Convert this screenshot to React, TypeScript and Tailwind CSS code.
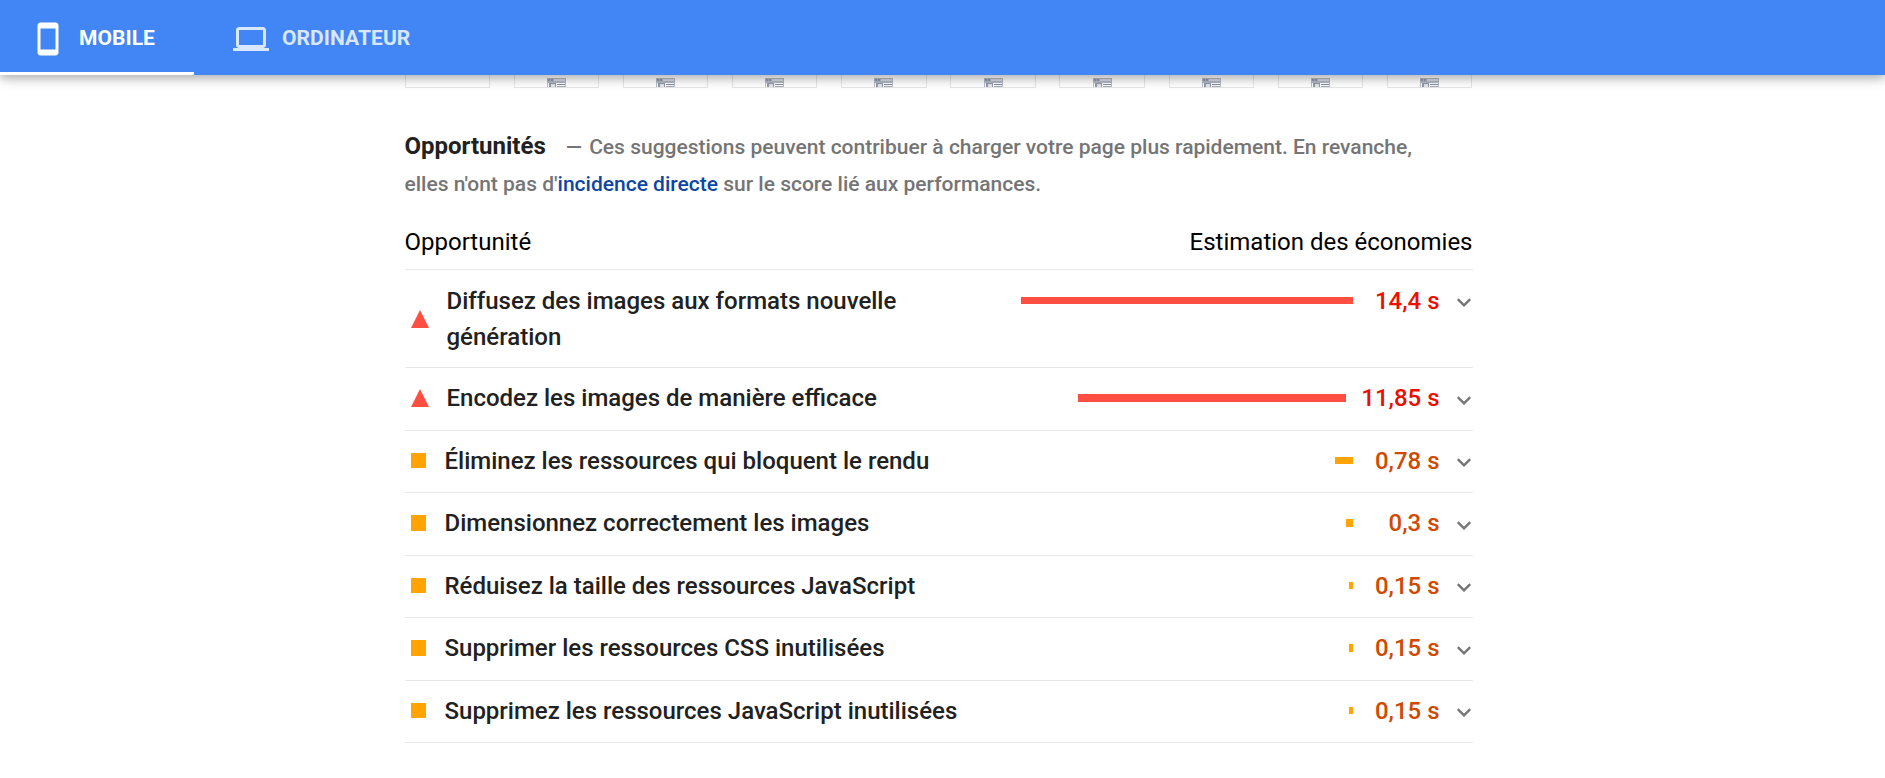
import React from "react";

type Level = "fail" | "average";

interface Opportunity {
  title: string;
  value: string;
  level: Level;
  bar: number;
}

const opportunities: Opportunity[] = [
  { title: "Diffusez des images aux formats nouvelle génération", value: "14,4 s", level: "fail", bar: 332 },
  { title: "Encodez les images de manière efficace", value: "11,85 s", level: "fail", bar: 268 },
  { title: "Éliminez les ressources qui bloquent le rendu", value: "0,78 s", level: "average", bar: 18 },
  { title: "Dimensionnez correctement les images", value: "0,3 s", level: "average", bar: 7 },
  { title: "Réduisez la taille des ressources JavaScript", value: "0,15 s", level: "average", bar: 4 },
  { title: "Supprimer les ressources CSS inutilisées", value: "0,15 s", level: "average", bar: 4 },
  { title: "Supprimez les ressources JavaScript inutilisées", value: "0,15 s", level: "average", bar: 4 },
];

function PhoneIcon() {
  return (
    <svg className="mt-0.5 h-9 w-9" viewBox="0 0 24 24" fill="currentColor">
      <path d="M17 1.01 7 1c-1.1 0-2 .9-2 2v18c0 1.1.9 2 2 2h10c1.1 0 2-.9 2-2V3c0-1.1-.9-1.99-2-1.99zM17 19H7V5h10v14z" />
    </svg>
  );
}

function LaptopIcon() {
  return (
    <svg className="mt-0.5 h-9 w-9" viewBox="0 0 24 24" fill="currentColor">
      <path d="M20 18c1.1 0 1.99-.9 1.99-2L22 6c0-1.1-.9-2-2-2H4c-1.1 0-2 .9-2 2v10c0 1.1.9 2 2 2H0v2h24v-2h-4zM4 6h16v10H4V6z" />
    </svg>
  );
}

function Thumbnail({ loaded }: { loaded: boolean }) {
  return (
    <div className="flex h-[13px] w-[85.5px] justify-center border border-t-0 border-[#e6e6e6]">
      {loaded && (
        <svg className="mt-[3px] h-[9px] w-[19px]" viewBox="0 0 19 9">
          <path d="M0 0h19v5H0z" fill="#b3b9c5" />
          <path d="M7 1h11v2H7z" fill="#d5d9e0" />
          <path d="M1 1h2v2H1zM4 1h2v2H4z" fill="#8f97a8" />
          <path d="M0 5h1v4H0zM18 5h1v4h-1z" fill="#b9bfca" />
          <path d="M2 5h7v4H8V6H4v3H2z" fill="#9299a9" />
          <path d="M4 6h4v3H4z" fill="#e2e5ea" />
          <path d="M10 6h8v1h-8z" fill="#868e9e" />
          <path d="M10 8h8v1h-8z" fill="#a4abb9" />
        </svg>
      )}
    </div>
  );
}

function Row({ item }: { item: Opportunity }) {
  const fail = item.level === "fail";
  return (
    <div className="flex items-start border-b border-[#e8e8e8] pt-3 pb-[13.5px] text-[24px] leading-[36px] font-medium first:pt-[13px] first:pb-[12.5px]">
      <div className={fail ? "flex w-[42px] shrink-0 items-center self-stretch pl-1.5" : "flex w-10 shrink-0 items-center self-stretch pl-1.5"}>
        {fail ? (
          <svg className="h-[18px] w-[18px]" viewBox="0 0 18 18">
            <path d="M9 0l9 18H0z" fill="#ff4e42" />
          </svg>
        ) : (
          <span className="mb-[0.8px] h-[15.6px] w-[15px] bg-[#ffa400]" />
        )}
      </div>
      <div className="w-[520px] text-[#212121]">{item.title}</div>
      <div className="flex h-9 flex-1 items-center justify-end">
        <span className={fail ? "mb-[0.5px] h-[7.5px] bg-[#ff4e42]" : "mb-[0.5px] h-[7.5px] bg-[#ffa400]"} style={{ width: item.bar }} />
      </div>
      <div className={fail ? "ml-[15px] min-w-[72px] text-right whitespace-nowrap text-[#eb0f00]" : "ml-[15px] min-w-[72px] text-right whitespace-nowrap text-[#d04900]"}>
        {item.value}
      </div>
      <div className="flex h-9 w-[33px] shrink-0 items-center justify-end pr-0.5">
        <svg className="mt-1 h-[9px] w-[14px]" viewBox="0 0 14 9" fill="none" stroke="#757575" strokeWidth="2.4">
          <path d="M.8 1.2 7 7.3l6.2-6.1" />
        </svg>
      </div>
    </div>
  );
}

export default function App() {
  return (
    <div className="h-[778px] overflow-hidden bg-white font-['Roboto',sans-serif]">
      <header className="relative z-10 flex h-[75px] bg-[#4285f4] text-[21px] leading-[30px] font-bold tracking-[0.06px] shadow-[0_3px_8px_rgba(0,0,0,0.16),0_4px_12px_rgba(0,0,0,0.18)]">
        <div className="flex w-[194px] items-center border-b-[3px] border-white pt-1 pl-[30px] text-white">
          <PhoneIcon />
          <span className="ml-[13px]">MOBILE</span>
        </div>
        <div className="flex items-center pb-[3px] pt-1 pl-[39px] text-white/80">
          <LaptopIcon />
          <span className="ml-[13px]">ORDINATEUR</span>
        </div>
      </header>
      <main className="ml-[404.5px] w-[1068px]">
        <div className="flex justify-between">
          {Array.from({ length: 10 }, (_, i) => (
            <Thumbnail key={i} loaded={i > 0} />
          ))}
        </div>
        <p className="mt-[40px] pr-10 text-[21px] leading-[37px] font-medium text-[#757575]">
          <span className="mr-5 text-[24px] font-bold text-[#212121]">Opportunités</span>
          <span className="mr-0.5">—</span> Ces suggestions peuvent contribuer à charger votre page plus rapidement. En revanche, elles n'ont pas d'
          <a className="text-[#0c46a5]">incidence directe</a> sur le score lié aux performances.
        </p>
        <div className="flex h-[66.8px] items-end justify-between border-b border-[#e8e8e8] pb-[9px] text-[24px] leading-[36px] text-black">
          <span>Opportunité</span>
          <span>Estimation des économies</span>
        </div>
        <div>
          {opportunities.map((item) => (
            <Row key={item.title} item={item} />
          ))}
        </div>
      </main>
    </div>
  );
}
